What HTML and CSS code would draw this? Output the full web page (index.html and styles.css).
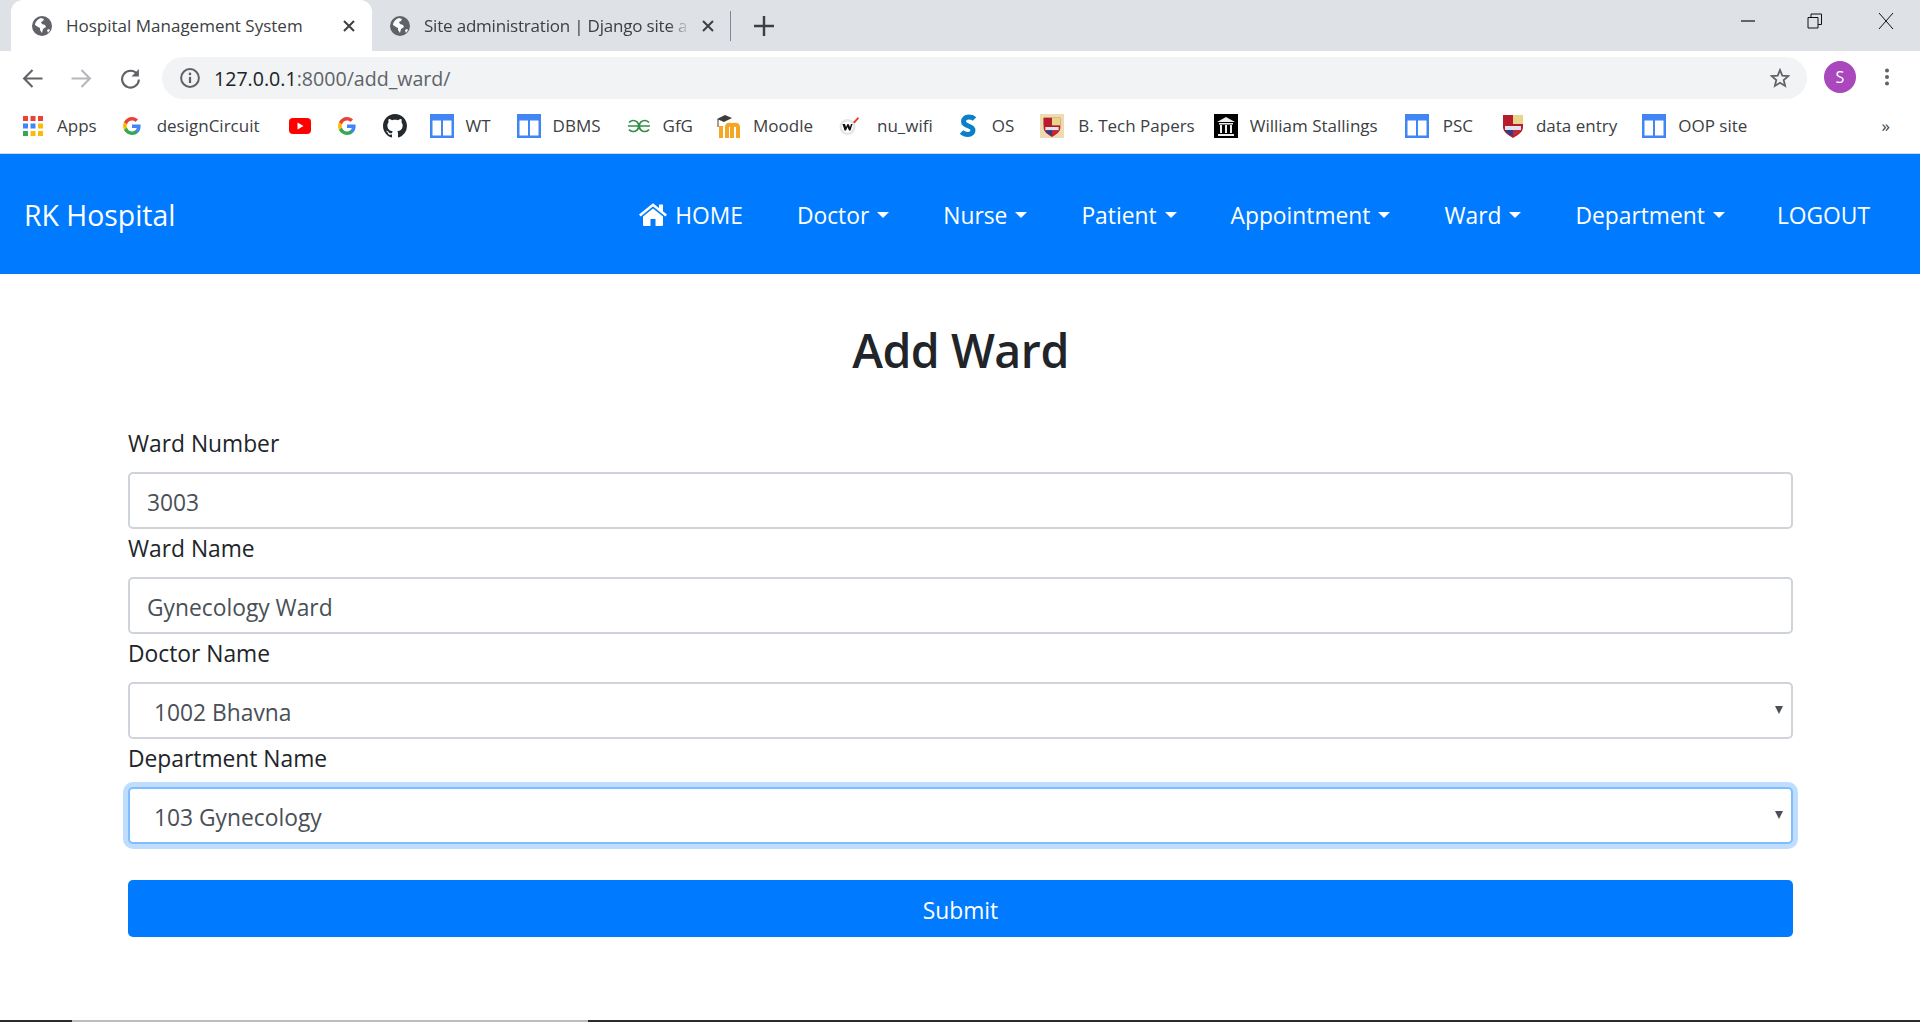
FILE: index.html
```html
<!DOCTYPE html>
<html lang="en">
<head>
    <meta charset="UTF-8">
    <title>Hospital Management System</title>
    <link rel="stylesheet" href="styles.css">
</head>
<body>
    <!-- shared icons -->
    <svg class="defs" width="0" height="0">
        <symbol id="globe" viewBox="0 0 20 20">
            <circle cx="10" cy="10" r="10" fill="#5f6368"/>
            <path d="M9 2C6 3 3 6 3 9l3 2 2 1v2l2 3 1-4 3-2-1-2-3-1-1-2 2-1 1-2zM15 14l2-1 1 1-2 3z" fill="#fff"/>
        </symbol>
        <symbol id="close" viewBox="0 0 12 12">
            <path d="M1 1l10 10M11 1L1 11" stroke="#3c4043" stroke-width="2" fill="none"/>
        </symbol>
        <symbol id="gicon" viewBox="0 0 18 18">
            <path d="M17.6 9.2c0-.6 0-1.2-.2-1.7H9v3.4h4.8c-.2 1.1-.8 2-1.8 2.7v2.2h2.900c1.7-1.600 2.700-3.900 2.700-6.600z" fill="#4285f4"/>
            <path d="M9 18c2.400 0 4.500-.8 5.900-2.200L12 13.600c-.8.5-1.800.9-3 .9-2.300 0-4.300-1.600-5-3.700H1v2.300C2.500 16 5.500 18 9 18z" fill="#34a853"/>
            <path d="M4 10.700c-.2-.5-.3-1.100-.3-1.700s.1-1.200.3-1.700V5H1C.4 6.200 0 7.600 0 9s.4 2.800 1 4z" fill="#fbbc05"/>
            <path d="M9 3.600c1.300 0 2.500.4 3.400 1.300L15 2.400C13.500.9 11.400 0 9 0 5.500 0 2.500 2 1 5l3 2.300c.7-2.100 2.700-3.700 5-3.700z" fill="#ea4335"/>
        </symbol>
        <symbol id="page" viewBox="0 0 24 24">
            <path fill-rule="evenodd" d="M0 0h24v24H0zM2.500 6.500v15H11v-15zM13 6.500v15h8.500v-15z" fill="#4285f4"/>
        </symbol>
        <symbol id="shield" viewBox="0 0 20 24">
            <path d="M0 1h20v12c0 5-5 8-10 11C5 21 0 18 0 13z" fill="#b71c2c"/>
            <path d="M10 1h10v9H10z" fill="#e8d48a"/>
            <path d="M0 1h10v9H0z" fill="#b71c2c"/>
            <path d="M2 12h16v4H2z" fill="#dfe3ee"/>
            <path d="M10 16h8c-1 3-5 5-8 6z" fill="#c62838"/>
            <path d="M10 16H2c1 3 5 5 8 6z" fill="#2b3f8c"/>
        </symbol>
    </svg>

    <header class="chrome">
        <div class="tabstrip">
            <div class="tab tab-active">
                <svg class="favicon"><use href="#globe"/></svg>
                <span class="tab-title">Hospital Management System</span>
                <svg class="tab-close"><use href="#close"/></svg>
            </div>
            <div class="tab tab-other">
                <svg class="favicon"><use href="#globe"/></svg>
                <span class="tab-title tab-fade">Site administration | Django site a</span>
                <svg class="tab-close"><use href="#close"/></svg>
            </div>
            <div class="tab-sep"></div>
            <svg class="new-tab" viewBox="0 0 18 18"><path d="M9 0v18M0 9h18" stroke="#3c4043" stroke-width="2.2"/></svg>
            <div class="win-controls">
                <svg class="win-icon" viewBox="0 0 16 16"><path d="M1 8h14" stroke="#111" stroke-width="1.2"/></svg>
                <svg class="win-icon win-restore" viewBox="0 0 16 16"><path d="M1 4.500h10V15H1zM4 4.500V1h10.500v10.500H11" fill="none" stroke="#111" stroke-width="1"/></svg>
                <svg class="win-icon" viewBox="0 0 16 16"><path d="M1 0l14 16M15 0L1 16" stroke="#111" stroke-width="1"/></svg>
            </div>
        </div>

        <div class="toolbar">
            <svg class="tool-icon" viewBox="0 0 20 20"><path d="M19.500 10H2M10 2l-8 8 8 8" fill="none" stroke="#5f6368" stroke-width="2"/></svg>
            <svg class="tool-icon" viewBox="0 0 20 20"><path d="M.5 10H18M10 2l8 8-8 8" fill="none" stroke="#b4b7bb" stroke-width="2"/></svg>
            <svg class="tool-icon" viewBox="0 0 20 20"><path d="M16.500 6A8 8 0 1 0 18 11" fill="none" stroke="#5f6368" stroke-width="2"/><path d="M18 1v7h-7z" fill="#5f6368"/></svg>
            <div class="omnibox">
                <svg class="info-icon" viewBox="0 0 18 18"><circle cx="9" cy="9" r="8" fill="none" stroke="#5f6368" stroke-width="1.8"/><path d="M9 8v5.500" stroke="#5f6368" stroke-width="2"/><circle cx="9" cy="5.300" r="1.2" fill="#5f6368"/></svg>
                <span class="url"><span class="url-host">127.0.0.1</span>:8000/add_ward/</span>
                <svg class="star" viewBox="0 0 20 20"><path d="M10 2l2.300 5.600 6 .5-4.600 3.900 1.400 5.900-5.100-3.100-5.100 3.100 1.400-5.900L1.700 8.100l6-.5z" fill="none" stroke="#5f6368" stroke-width="1.8"/></svg>
            </div>
            <div class="avatar">S</div>
            <svg class="kebab" viewBox="0 0 4 18"><circle cx="2" cy="2.500" r="2" fill="#5f6368"/><circle cx="2" cy="9" r="2" fill="#5f6368"/><circle cx="2" cy="15.500" r="2" fill="#5f6368"/></svg>
        </div>

        <div class="bookmarks">
            <a class="bm bm-apps">
                <svg class="bm-icon" viewBox="0 0 20 20">
                    <path d="M0 0h5v5H0z M7.500 0h5v5h-5z M15 0h5v5h-5z" fill="#ea4335"/>
                    <path d="M0 7.500h5v5H0z" fill="#4285f4"/><path d="M7.500 7.500h5v5h-5z" fill="#4285f4"/><path d="M15 7.500h5v5h-5z" fill="#fbbc05"/>
                    <path d="M0 15h5v5H0z" fill="#34a853"/><path d="M7.500 15h5v5h-5z" fill="#fbbc05"/><path d="M15 15h5v5h-5z" fill="#fbbc05"/>
                </svg>
                <span>Apps</span>
            </a>
            <a class="bm bm-g"><svg class="bm-icon"><use href="#gicon"/></svg><span>designCircuit</span></a>
            <a class="bm bm-yt">
                <svg class="bm-icon" viewBox="0 0 22 16"><rect width="22" height="16" rx="4" fill="#f00"/><path d="M8.500 4.500v7l6-3.500z" fill="#fff"/></svg>
            </a>
            <a class="bm bm-g2"><svg class="bm-icon"><use href="#gicon"/></svg></a>
            <a class="bm bm-gh">
                <svg class="bm-icon" viewBox="0 0 16 16"><path fill="#24292e" d="M8 0C3.580 0 0 3.580 0 8c0 3.540 2.290 6.530 5.470 7.590.4.070.55-.17.55-.38 0-.19-.01-.82-.01-1.490-2.010.37-2.530-.49-2.690-.94-.09-.23-.48-.94-.82-1.130-.28-.15-.68-.52-.01-.53.63-.01 1.080.58 1.230.82.72 1.210 1.870.87 2.330.66.07-.52.28-.87.51-1.070-1.780-.2-3.640-.89-3.640-3.950 0-.87.31-1.590.82-2.150-.08-.2-.36-1.020.08-2.120 0 0 .67-.21 2.200.82.64-.18 1.320-.27 2-.27.68 0 1.360.09 2 .27 1.530-1.040 2.200-.82 2.200-.82.44 1.100.16 1.920.08 2.120.51.56.82 1.270.82 2.150 0 3.070-1.870 3.750-3.650 3.950.29.25.54.73.54 1.480 0 1.070-.01 1.930-.01 2.200 0 .21.15.46.55.38A8.013 8.013 0 0016 8c0-4.420-3.580-8-8-8z"/></svg>
            </a>
            <a class="bm bm-wt"><svg class="bm-icon"><use href="#page"/></svg><span>WT</span></a>
            <a class="bm bm-dbms"><svg class="bm-icon"><use href="#page"/></svg><span>DBMS</span></a>
            <a class="bm bm-gfg">
                <svg class="bm-icon" viewBox="0 0 24 16"><path d="M1 8h22M2 4.500A5.500 5.500 0 1 1 2 11.500M22 4.500A5.500 5.500 0 1 0 22 11.500" fill="none" stroke="#2f8d46" stroke-width="1.7"/></svg>
                <span>GfG</span>
            </a>
            <a class="bm bm-moodle">
                <svg class="bm-icon" viewBox="0 0 24 24"><path d="M4 24V12M10 24V13c0-3 5-3 5 0v11M15 13c0-3 6-3 6 0v11" fill="none" stroke="#f5a623" stroke-width="4"/><path d="M0 5l8-4 7 3-8 4z" fill="#3c3c3c"/><path d="M1 5v8" stroke="#3c3c3c"/></svg>
                <span>Moodle</span>
            </a>
            <a class="bm bm-nu">
                <svg class="bm-icon" viewBox="0 0 20 20"><circle cx="8.500" cy="11" r="8" fill="#e6e6e6"/><circle cx="8.500" cy="11" r="5.500" fill="#fff"/><path d="M3.500 8h2.500l1 3 1.500-3h1l1.500 3 1-3h1.500l-2 6.500h-1.500L8.500 11 7 14.500H5.500z" fill="#111"/><path d="M14 6l5-5 1 1.500-4.500 5z" fill="#e53935"/></svg>
                <span>nu_wifi</span>
            </a>
            <a class="bm bm-os">
                <svg class="bm-icon" viewBox="0 0 16 24"><path d="M14.500 5C13 3.500 11 3 8.500 3 5.500 3 3.500 4.800 3.500 7.500c0 5.500 9.500 3.500 9.500 8.500 0 2.500-2 4.500-5 4.500-2.500 0-5-1-6.500-2.500" fill="none" stroke="#0b7fc7" stroke-width="5"/></svg>
                <span>OS</span>
            </a>
            <a class="bm bm-btech">
                <svg class="bm-icon" viewBox="0 0 24 24"><rect width="24" height="24" fill="#ecdcb0"/><use href="#shield" x="2" y="3" width="20" height="20"/></svg>
                <span>B. Tech Papers</span>
            </a>
            <a class="bm bm-ws">
                <svg class="bm-icon" viewBox="0 0 24 24"><rect width="24" height="24" fill="#000"/><path d="M3 8l9-5 9 5zM5 9h14v1.500H5zM6 11h2v8H6zM11 11h2v8h-2zM16 11h2v8h-2zM4 20h16v2H4z" fill="#eee"/></svg>
                <span>William Stallings</span>
            </a>
            <a class="bm bm-psc"><svg class="bm-icon"><use href="#page"/></svg><span>PSC</span></a>
            <a class="bm bm-data"><svg class="bm-icon"><use href="#shield"/></svg><span>data entry</span></a>
            <a class="bm bm-oop"><svg class="bm-icon"><use href="#page"/></svg><span>OOP site</span></a>
            <span class="bm-more">»</span>
        </div>
    </header>

    <nav class="navbar">
        <a class="brand">RK Hospital</a>
        <ul class="nav-list">
            <li class="nav-link">
                <svg class="home-icon" viewBox="0 0 28 24"><path d="M14 5.500L4 13.500V22a1 1 0 0 0 1 1h6.500v-7h5v7H23a1 1 0 0 0 1-1v-8.500z" fill="#fff"/><path d="M0.800 12.500L14 1.800l13.200 10.700" fill="none" stroke="#fff" stroke-width="2.600"/><path d="M20 1.500h4V9l-4-3z" fill="#fff"/></svg>
                HOME
            </li>
            <li class="nav-link caret">Doctor</li>
            <li class="nav-link caret">Nurse</li>
            <li class="nav-link caret">Patient</li>
            <li class="nav-link caret">Appointment</li>
            <li class="nav-link caret">Ward</li>
            <li class="nav-link caret">Department</li>
            <li class="nav-link nav-logout">LOGOUT</li>
        </ul>
    </nav>

    <main class="content">
        <h1 class="page-title">Add Ward</h1>
        <form class="ward-form">
            <label class="field-label" for="ward_no">Ward Number</label>
            <input class="field" id="ward_no" type="text" value="3003">
            <label class="field-label" for="ward_name">Ward Name</label>
            <input class="field" id="ward_name" type="text" value="Gynecology Ward">
            <label class="field-label" for="doctor">Doctor Name</label>
            <div class="field field-select" id="doctor">1002 Bhavna</div>
            <label class="field-label" for="dept">Department Name</label>
            <div class="field field-select field-focus" id="dept">103 Gynecology</div>
            <button class="submit-btn" type="button">Submit</button>
        </form>
    </main>

    <div class="taskbar"><div class="taskbar-thumb"></div></div>
</body>
</html>
```

FILE: styles.css
```css
* {
    box-sizing: border-box;
}

html, body {
    height: 100%;
}

body {
    margin: 0;
    font-family: "Open Sans", "Noto Sans", sans-serif;
    background-color: #fff;
    color: #212529;
    display: flex;
    flex-direction: column;
    overflow: hidden;
}

.defs {
    position: absolute;
}

/* tab strip */
.tabstrip {
    height: 51px;
    background-color: #dee1e6;
    display: flex;
    align-items: center;
    padding-left: 11px;
    font-size: 17px;
    color: #3c4043;
}

.tab {
    height: 51px;
    display: flex;
    align-items: center;
    flex: none;
}

.tab-active {
    width: 361px;
    background-color: #fff;
    border-radius: 12px 12px 0 0;
    padding: 0 17px 0 21px;
}

.tab-other {
    width: 358px;
    padding: 0 16px 0 18px;
}

.favicon {
    width: 20px;
    height: 20px;
    flex: none;
}

.tab-title {
    flex: 1;
    margin-left: 14px;
    white-space: nowrap;
}

.tab-fade {
    margin-left: 14px;
    letter-spacing: -0.2px;
    -webkit-mask-image: linear-gradient(to right, #000 92%, transparent 100%);
    mask-image: linear-gradient(to right, #000 92%, transparent 100%);
}

.tab-close {
    width: 12px;
    height: 12px;
    flex: none;
    margin-left: 12px;
}

.tab-sep {
    width: 1px;
    height: 30px;
    background-color: #80868b;
    flex: none;
}

.new-tab {
    width: 20px;
    height: 20px;
    margin-left: 23px;
    flex: none;
}

.win-controls {
    margin-left: auto;
    display: flex;
    gap: 53px;
    padding-right: 26px;
    align-self: flex-start;
    padding-top: 13px;
}

.win-icon {
    width: 16px;
    height: 16px;
}

.win-restore {
    margin-left: -2px;
    margin-right: 2px;
}

/* toolbar */
.toolbar {
    height: 52px;
    display: flex;
    align-items: center;
    padding-left: 22px;
    padding-top: 2px;
    gap: 28px;
}

.tool-icon {
    width: 21px;
    height: 21px;
    flex: none;
}

.omnibox {
    width: 1645px;
    height: 42px;
    margin-left: -7px;
    background-color: #f1f3f4;
    border-radius: 21px;
    display: flex;
    align-items: center;
    padding: 0 17px 0 18px;
    flex: none;
}

.info-icon {
    width: 20px;
    height: 20px;
}

.url {
    margin-left: 14px;
    font-size: 19.6px;
    color: #5f6368;
}

.url-host {
    color: #202124;
}

.star {
    width: 20px;
    height: 20px;
    margin-left: auto;
}

.avatar {
    width: 32px;
    height: 32px;
    border-radius: 50%;
    background-color: #ab47bc;
    color: #fff;
    font-size: 16px;
    display: flex;
    align-items: center;
    justify-content: center;
    margin-left: -11px;
    margin-top: -2px;
    flex: none;
}

.kebab {
    width: 4px;
    height: 18px;
    margin-left: 1px;
    margin-top: -2px;
    flex: none;
}

/* bookmarks */
.bookmarks {
    height: 51px;
    display: flex;
    align-items: center;
    padding-left: 23px;
    padding-bottom: 5px;
    font-size: 17px;
    color: #3c4043;
    border-bottom: 1px solid #d5dbe2;
}

.bm {
    display: flex;
    align-items: center;
    flex: none;
    gap: 12px;
    margin-right: 26px;
    white-space: nowrap;
}

.bm-icon {
    width: 24px;
    height: 24px;
    flex: none;
}

.bm-apps .bm-icon {
    width: 20px;
    height: 20px;
}

.bm-apps {
    gap: 14px;
}

.bm-g .bm-icon,
.bm-g2 .bm-icon {
    width: 18px;
    height: 18px;
}

.bm-g {
    gap: 16px;
    margin-right: 29px;
}

.bm-yt .bm-icon {
    width: 22px;
    height: 16px;
}

.bm-yt,
.bm-g2 {
    margin-right: 27px;
}

.bm-gh {
    margin-right: 23px;
}

.bm-gfg {
    margin-right: 24px;
}

.bm-gfg .bm-icon {
    height: 16px;
}

.bm-nu {
    gap: 18px;
    margin-right: 27px;
}

.bm-nu .bm-icon {
    width: 20px;
    height: 20px;
}

.bm-os {
    gap: 16px;
}

.bm-os .bm-icon {
    width: 16px;
}

.bm-btech {
    gap: 14px;
    margin-right: 19px;
}

.bm-ws {
    margin-right: 27px;
}

.bm-psc {
    gap: 14px;
    margin-right: 30px;
}

.bm-data {
    gap: 13px;
    margin-right: 25px;
}

.bm-data .bm-icon {
    width: 20px;
}

.bm-more {
    margin-left: auto;
    margin-right: 30px;
    font-size: 17px;
}

/* navbar */
.navbar {
    height: 120px;
    background-color: #007bff;
    display: flex;
    align-items: center;
    justify-content: space-between;
    padding: 2px 25px 0 24px;
    color: #fff;
    flex: none;
}

.brand {
    font-size: 28.4px;
}

.nav-list {
    list-style: none;
    margin: 0;
    padding: 0 25px 0 0;
    display: flex;
    gap: 54px;
    font-size: 22.8px;
}

.nav-link {
    display: flex;
    align-items: center;
    white-space: nowrap;
}

.nav-logout {
    margin-left: -2px;
}

.home-icon {
    width: 28px;
    height: 24px;
    margin-right: 8px;
}

.caret::after {
    content: "";
    display: inline-block;
    margin-left: 8px;
    border-top: 6px solid #fff;
    border-left: 6px solid transparent;
    border-right: 6px solid transparent;
}

/* form */
.content {
    flex: 1;
    padding: 0 127px 0 128px;
}

.page-title {
    margin: 0;
    padding-top: 46px;
    height: 134px;
    text-align: center;
    font-size: 46.5px;
    line-height: 60px;
    font-weight: 600;
    letter-spacing: -0.5px;
}

.ward-form {
    display: flex;
    flex-direction: column;
}

.field-label {
    height: 64px;
    font-size: 22.8px;
    line-height: 30px;
    padding-top: 21px;
    display: block;
}

.field-label ~ .field-label {
    height: 48px;
    padding-top: 5px;
}

.field {
    height: 57px;
    width: 100%;
    padding: 3px 17px 0;
    border: 2px solid #ced4da;
    border-radius: 5px;
    font-family: inherit;
    font-size: 22.8px;
    color: #495057;
    background-color: #fff;
    outline: none;
}

.field-select {
    position: relative;
    display: flex;
    align-items: center;
    padding-left: 24px;
}

/* little native select arrow */
.field-select::after {
    content: "";
    position: absolute;
    right: 8px;
    top: 22px;
    border-top: 8px solid #495057;
    border-left: 4.5px solid transparent;
    border-right: 4.5px solid transparent;
}

.field-focus {
    border-color: #80bdff;
    box-shadow: 0 0 0 5px rgba(0, 123, 255, 0.25);
}

.submit-btn {
    height: 57px;
    margin-top: 36px;
    padding-top: 4px;
    background-color: #007bff;
    color: #fff;
    border: none;
    border-radius: 5px;
    font-family: inherit;
    font-size: 22.8px;
}

/* bottom edge of the screen */
.taskbar {
    height: 2px;
    background-color: #2b2b2b;
    flex: none;
    position: relative;
}

.taskbar-thumb {
    position: absolute;
    left: 72px;
    width: 516px;
    height: 2px;
    background-color: #bdbdbd;
}
```
